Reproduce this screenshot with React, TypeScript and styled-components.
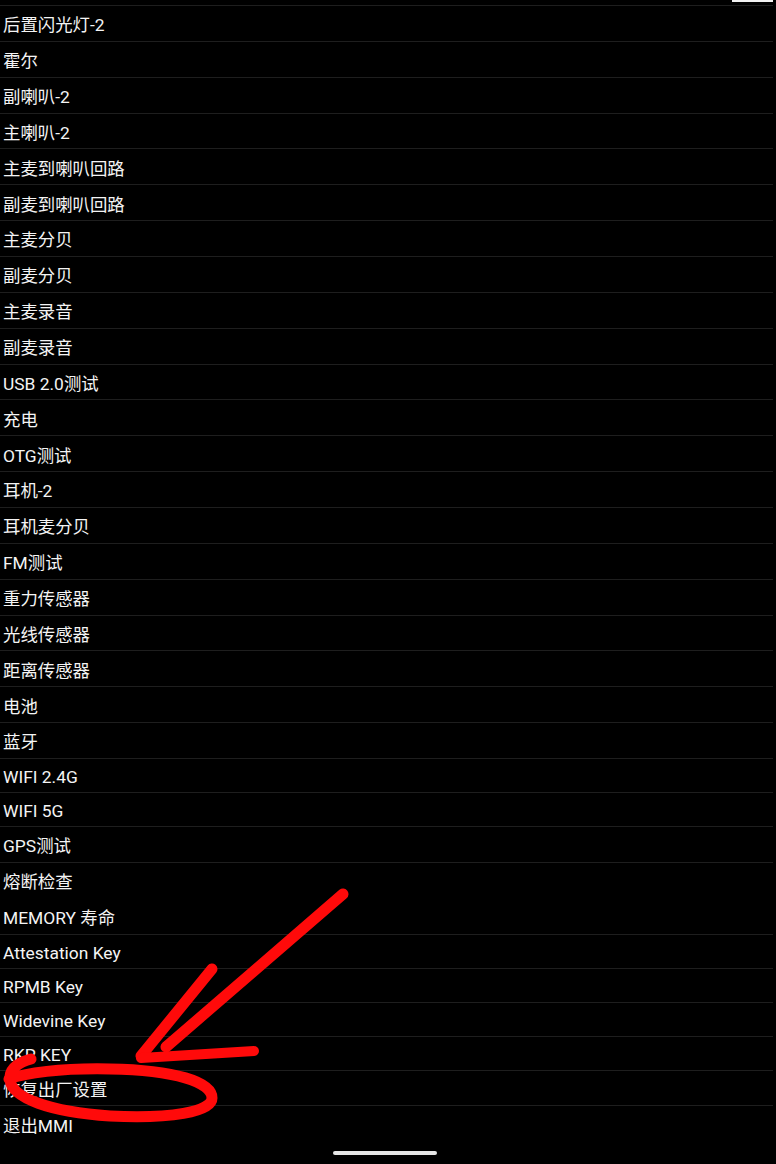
import React from "react";
import styled, { createGlobalStyle } from "styled-components";

const GlobalStyle = createGlobalStyle`
  html, body {
    margin: 0;
    padding: 0;
    background: #000;
  }
  body {
    font-family: Roboto, "Noto Sans CJK SC", "Noto Sans", sans-serif;
    -webkit-font-smoothing: antialiased;
  }
`;

const Screen = styled.div`
  position: relative;
  width: 776px;
  height: 1164px;
  background: #000;
  overflow: hidden;
`;

const ScrollThumb = styled.div`
  position: absolute;
  top: 0;
  right: 3px;
  width: 41px;
  height: 2px;
  background: #f2f2f2;
`;

const List = styled.ul`
  list-style: none;
  margin: 0;
  padding: 0;
  width: 773px;
  display: flex;
  flex-direction: column;
`;

const ClippedRow = styled.li`
  height: 5px;
  border-bottom: 1px solid #1e1e1e;
`;

const Row = styled.li<{ $compact?: boolean; $noDivider?: boolean }>`
  box-sizing: border-box;
  height: ${(p) => (p.$compact ? "34px" : "35.86px")};
  display: flex;
  align-items: center;
  padding: 5px 0 0 3px;
  border-bottom: 1px solid ${(p) => (p.$noDivider ? "transparent" : "#1e1e1e")};
  color: #f4f4f4;
  font-size: 17.4px;
  line-height: 1;
  white-space: nowrap;
`;

const LastRow = styled(Row)`
  border-bottom: none;
`;

const NavHandle = styled.div`
  position: absolute;
  left: 333px;
  top: 1151px;
  width: 104px;
  height: 4px;
  border-radius: 2px;
  background: #e6e6e6;
`;

const Annotation = styled.svg`
  position: absolute;
  left: 0;
  top: 0;
  pointer-events: none;
`;

type Item = { label: string; compact?: boolean; noDivider?: boolean };

const items: Item[] = [
  { label: "后置闪光灯-2" },
  { label: "霍尔" },
  { label: "副喇叭-2" },
  { label: "主喇叭-2" },
  { label: "主麦到喇叭回路" },
  { label: "副麦到喇叭回路" },
  { label: "主麦分贝" },
  { label: "副麦分贝" },
  { label: "主麦录音" },
  { label: "副麦录音" },
  { label: "USB 2.0测试" },
  { label: "充电" },
  { label: "OTG测试" },
  { label: "耳机-2" },
  { label: "耳机麦分贝" },
  { label: "FM测试" },
  { label: "重力传感器" },
  { label: "光线传感器" },
  { label: "距离传感器" },
  { label: "电池" },
  { label: "蓝牙" },
  { label: "WIFI 2.4G", compact: true },
  { label: "WIFI 5G", compact: true },
  { label: "GPS测试" },
  { label: "熔断检查", noDivider: true },
  { label: "MEMORY 寿命" },
  { label: "Attestation Key", compact: true },
  { label: "RPMB Key", compact: true },
  { label: "Widevine Key", compact: true },
  { label: "RKP KEY", compact: true },
  { label: "恢复出厂设置" },
];

export default function App() {
  return (
    <Screen>
      <GlobalStyle />
      <List>
        <ClippedRow />
        {items.map((it) => (
          <Row key={it.label} $compact={it.compact} $noDivider={it.noDivider}>
            {it.label}
          </Row>
        ))}
        <LastRow>退出MMI</LastRow>
      </List>
      <ScrollThumb />
      <NavHandle />
      <Annotation width="776" height="1164" viewBox="0 0 776 1164">
        <g
          fill="none"
          stroke="#ff0a0a"
          strokeLinecap="round"
          strokeLinejoin="round"
        >
          <path d="M343 894 L166 1047" strokeWidth="11" />
          <path d="M212 969 L141 1056" strokeWidth="11" />
          <path d="M254 1051 L141 1058" strokeWidth="10" />
          <path
            d="M31 1059 C20 1062 9 1068 10 1080 C12 1098 50 1112 110 1116 C170 1119 212 1112 212 1098 C212 1082 175 1070 110 1069 C60 1068 25 1073 9 1079"
            strokeWidth="11"
          />
        </g>
      </Annotation>
    </Screen>
  );
}
